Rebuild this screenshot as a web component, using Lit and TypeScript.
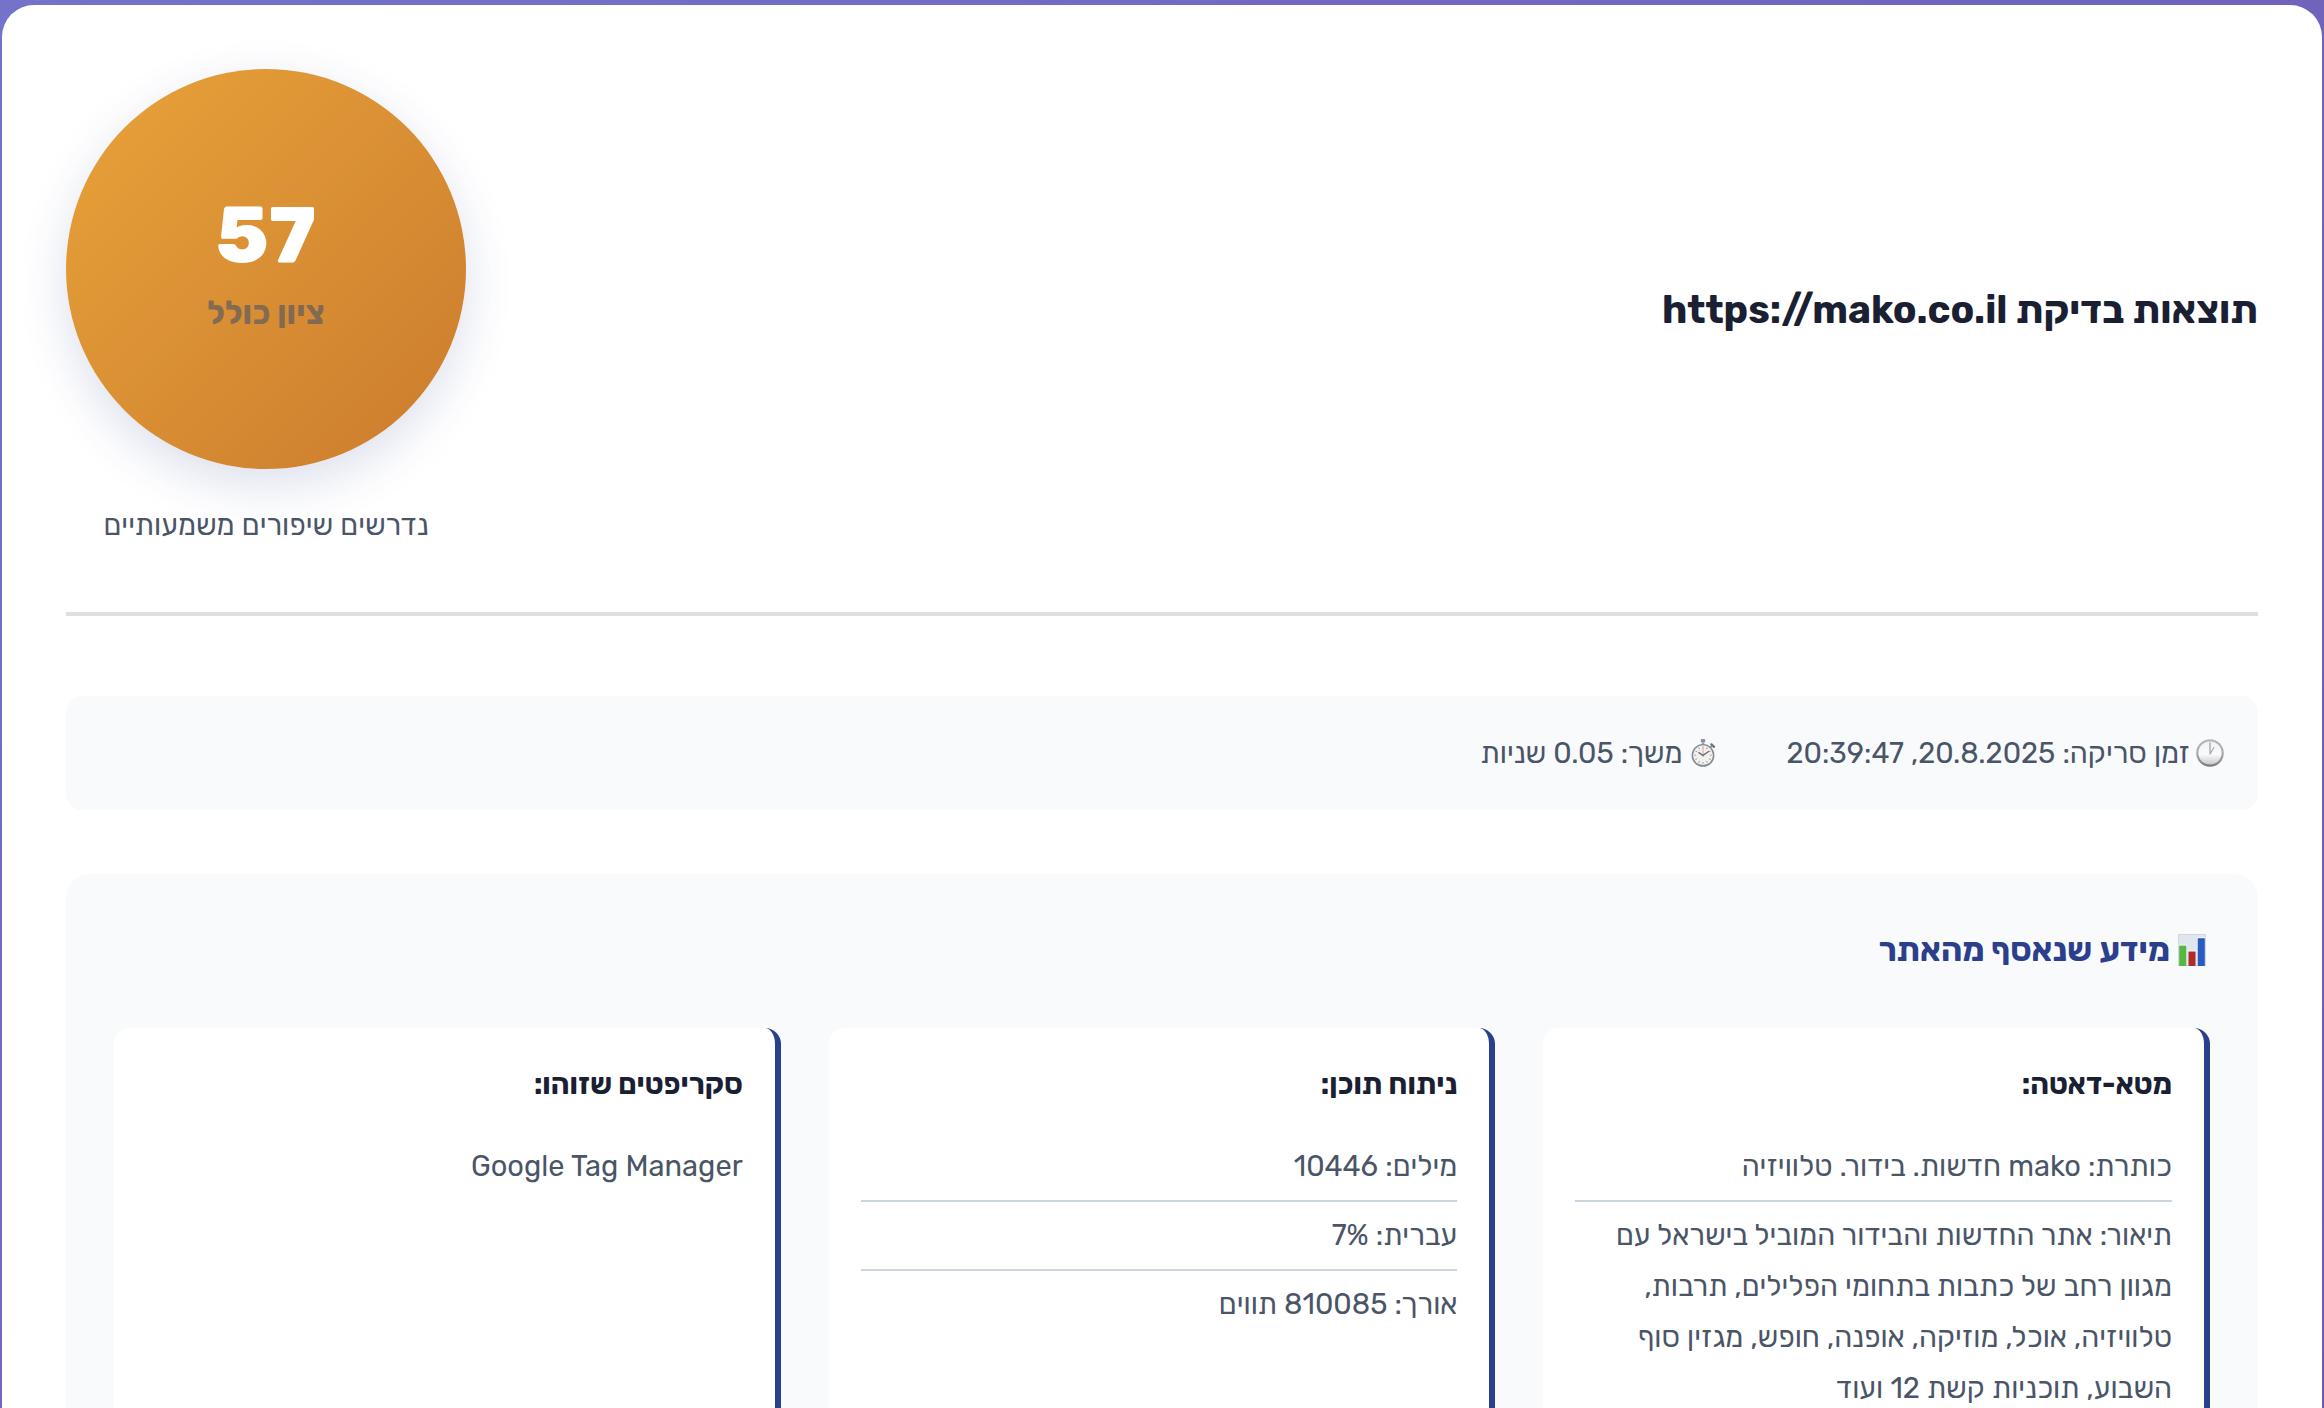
import { LitElement, html, css, svg } from "lit";
import { customElement } from "lit/decorators.js";

interface InfoCard {
  title: string;
  rows: string[];
}

const cards: InfoCard[] = [
  {
    title: "מטא-דאטה:",
    rows: [
      "כותרת: mako חדשות. בידור. טלוויזיה",
      "תיאור: אתר החדשות והבידור המוביל בישראל עם מגוון רחב של כתבות בתחומי הפלילים, תרבות, טלוויזיה, אוכל, מוזיקה, אופנה, חופש, מגזין סוף השבוע, תוכניות קשת 12 ועוד",
    ],
  },
  { title: "ניתוח תוכן:", rows: ["מילים: 10446", "עברית: 7%", "אורך: 810085 תווים"] },
  { title: "סקריפטים שזוהו:", rows: ["Google Tag Manager"] },
];

const clockIcon = html`<svg class="icon" viewBox="0 0 28 28" aria-hidden="true">
  <defs>
    <linearGradient id="rim" x1="0" y1="0" x2="0" y2="1">
      <stop offset="0" stop-color="#b3bac6" />
      <stop offset="0.6" stop-color="#a4a6aa" />
      <stop offset="1" stop-color="#77777a" />
    </linearGradient>
    <linearGradient id="face" x1="0" y1="0" x2="0" y2="1">
      <stop offset="0" stop-color="#f2f2f2" />
      <stop offset="0.55" stop-color="#fbfbfb" />
      <stop offset="1" stop-color="#c9c9c9" />
    </linearGradient>
  </defs>
  <circle cx="14" cy="14" r="13.8" fill="url(#rim)" />
  <circle cx="14" cy="14" r="11.6" fill="url(#face)" />
  <path d="M13.2 3.5h1.6v9l2.8-4.8 1.1.7-4 7.2h-1.5z" fill="#b4b4b6" />
</svg>`;

const ticks = Array.from({ length: 12 }, (_, i) => i * 30);

const stopwatchIcon = html`<svg class="icon" viewBox="0 0 28 28" aria-hidden="true">
  <rect x="11.8" y="0" width="4.4" height="3.4" rx="1" fill="#8b9099" />
  <rect x="12.8" y="3" width="2.4" height="3" fill="#a5a9b1" />
  <path d="M21.6 8.2l2-2" stroke="#8b9099" stroke-width="1.8" />
  <path d="M22.4 5.4l2.6 2.4" stroke="#6f747c" stroke-width="2.4" stroke-linecap="round" />
  <circle cx="14" cy="16.4" r="11.4" fill="#858a93" />
  <circle cx="14" cy="16.2" r="9.9" fill="#f3f1ee" />
  ${ticks.map(
    (a) => svg`<path d="M14 7.4v2" stroke="#9b9b9b" stroke-width="0.9" transform="rotate(${a} 14 16.2)" />`,
  )}
  <path d="M14 18V8" stroke="#eeb3a0" stroke-width="1.2" />
  <path d="M9.4 13.4l4.6 3 6-4.2" fill="none" stroke="#6a6d73" stroke-width="1.3" />
</svg>`;

const chartIcon = html`<svg class="icon chart" viewBox="0 0 28 32" aria-hidden="true">
  <rect x="0.5" y="0.5" width="27" height="31" fill="#dfe6ef" stroke="#d2d7dd" />
  <rect x="0.6" y="10.8" width="8.4" height="1.4" fill="#fbfdfb" />
  <rect x="1.2" y="11.6" width="7" height="20.4" fill="#56b843" />
  <rect x="9.8" y="16.6" width="8.4" height="1.4" fill="#fdfbfb" />
  <rect x="10.5" y="17.5" width="7" height="14.5" fill="#b32a27" />
  <rect x="19" y="3.2" width="8.4" height="1.4" fill="#fbfbfd" />
  <rect x="19.8" y="4.2" width="7" height="27.8" fill="#2a5cc0" />
</svg>`;

@customElement("app-root")
export class AppRoot extends LitElement {
  static styles = css`
    :host {
      display: block;
      box-sizing: border-box;
      height: 100vh;
      overflow: hidden;
      padding: 5px 2px 0;
      background: linear-gradient(135deg, #7472ca, #6c5ab1);
      color: #4a5568;
      font-family: Rubik, "Open Sans", "Liberation Sans", sans-serif;
      font-size: 29px;
      line-height: 51px;
    }
    h2,
    h3,
    h4,
    p,
    ul {
      margin: 0;
      padding: 0;
    }
    .report {
      box-sizing: border-box;
      min-height: 150vh;
      padding: 64px;
      border-radius: 32px;
      background: #fff;
    }
    .header {
      display: flex;
      justify-content: space-between;
      align-items: center;
      padding-bottom: 61px;
      border-bottom: 4px solid #e0e0e0;
      margin-bottom: 80px;
    }
    .title {
      font-size: 39px;
      font-weight: 700;
      color: #1a1f33;
    }
    .score {
      display: flex;
      flex-direction: column;
      align-items: center;
      gap: 31px;
    }
    .circle {
      box-sizing: border-box;
      width: 400px;
      height: 400px;
      border-radius: 50%;
      display: flex;
      flex-direction: column;
      align-items: center;
      justify-content: center;
      gap: 12px;
      padding-bottom: 6px;
      background: linear-gradient(135deg, #e8a33a, #cb7b2d);
      box-shadow: 0 16px 48px rgba(43, 63, 140, 0.16);
    }
    .value {
      font-size: 79px;
      line-height: 80px;
      font-weight: 800;
      color: #fff;
    }
    .caption {
      opacity: 0.6;
      font-size: 33px;
      font-weight: 700;
    }
    .meta {
      display: flex;
      gap: 68px;
      padding: 32px;
      margin-bottom: 64px;
      border-radius: 16px;
      background: #f8fafc;
      line-height: 50px;
    }
    .item,
    .heading {
      display: flex;
      align-items: center;
      gap: 4px;
    }
    .icon {
      width: 28px;
      height: 28px;
      margin: 0 2px;
      flex: none;
    }
    .chart {
      height: 32px;
      margin: 0 4px;
    }
    .panel {
      padding: 48px;
      border-radius: 24px;
      background: #f8fafc;
    }
    .heading {
      margin-bottom: 50px;
      font-size: 33px;
      line-height: 56px;
      font-weight: 700;
      color: #2b3f8c;
    }
    .grid {
      display: grid;
      grid-template-columns: repeat(3, 1fr);
      gap: 48px;
    }
    .card {
      padding: 32px;
      border-inline-start: 6px solid #2b3f8c;
      border-radius: 16px;
      background: #fff;
    }
    .card-title {
      margin-bottom: 24px;
      font-size: 29px;
      line-height: 49px;
      font-weight: 700;
      color: #1a1f33;
    }
    .rows {
      list-style: none;
    }
    .row {
      padding: 8px 0;
      border-bottom: 2px solid #cbd5e0;
    }
    .row:last-child {
      border-bottom: none;
    }
  `;

  render() {
    return html`
      <main class="report" dir="rtl" lang="he">
        <header class="header">
          <h2 class="title">תוצאות בדיקת https://mako.co.il</h2>
          <div class="score">
            <div class="circle">
              <span class="value">57</span>
              <span class="caption">ציון כולל</span>
            </div>
            <p>נדרשים שיפורים משמעותיים</p>
          </div>
        </header>
        <div class="meta">
          <span class="item">${clockIcon}<span>זמן סריקה: 20.8.2025, 20:39:47</span></span>
          <span class="item">${stopwatchIcon}<span>משך: 0.05 שניות</span></span>
        </div>
        <section class="panel">
          <h3 class="heading">${chartIcon}<span>מידע שנאסף מהאתר</span></h3>
          <div class="grid">
            ${cards.map(
              (card) => html`<article class="card">
                <h4 class="card-title">${card.title}</h4>
                <ul class="rows">
                  ${card.rows.map((row) => html`<li class="row">${row}</li>`)}
                </ul>
              </article>`,
            )}
          </div>
        </section>
      </main>
    `;
  }
}
